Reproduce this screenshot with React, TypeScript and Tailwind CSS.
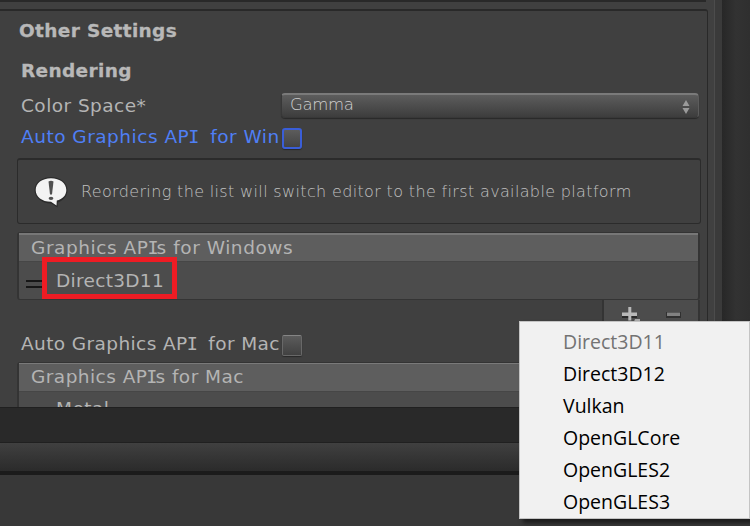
import React from "react";

const body = "font-['DejaVu_Sans',Verdana,sans-serif] text-[18.5px] leading-[24px] whitespace-pre text-[#b4b4b4]";
const heading = "font-['DejaVu_Sans',Verdana,sans-serif] text-[18.5px] leading-[24px] font-bold tracking-[0.350px] whitespace-pre text-[#b8b8b8] [-webkit-text-stroke:0.3px_#b8b8b8]";

function SerifI() {
  return <span className="-mx-px font-['DejaVu_Sans_Mono',monospace] text-[18.5px] tracking-[-1px]">I</span>;
}

function Checkbox({ active = false }: { active?: boolean }) {
  return (
    <span
      className={
        active
          ? "h-[21px] w-5 shrink-0 rounded-[3px] border-2 border-[#3a5ed8] bg-linear-to-b from-[#5c5c5c] to-[#444] shadow-[0_1px_1px_#292929]"
          : "h-[21px] w-5 shrink-0 rounded-[2px] border border-[#686868] border-t-[#858585] bg-linear-to-b from-[#5c5c5c] to-[#414141] shadow-[0_1px_1px_#292929]"
      }
    />
  );
}

function InfoIcon() {
  return (
    <svg width="38" height="34" viewBox="0 0 38 34" className="shrink-0">
      <path d="M19 2C9.800 2 2.500 7.500 2.500 15S9.800 28.500 19 28.500l6.500 4 .3-5C31.500 25.500 35.500 21.200 35.500 15 35.500 7.500 28.200 2 19 2Z" fill="#2c2c2c" />
      <path d="M19 3.200C10 3.200 3.700 8.200 3.700 15S10 26.800 19 26.800l5.500 3.700.3-4.900C30.500 24 34.300 20.700 34.300 15 34.300 8.200 28 3.200 19 3.200Z" fill="#f3f3f3" />
      <path d="M16.500 6.500q2.500-1.400 5 0L20 19.500h-2Z" fill="#505050" />
      <ellipse cx="19" cy="23.300" rx="2.400" ry="1.600" fill="#505050" />
    </svg>
  );
}

const apis = ["Direct3D11", "Direct3D12", "Vulkan", "OpenGLCore", "OpenGLES2", "OpenGLES3"];

export default function App() {
  return (
    <div className="relative h-[526px] w-[750px] overflow-hidden bg-[#383838]">
      <div className="flex h-[407px]">
        <div className="flex w-[722px] overflow-hidden bg-[#404040]">
          <div className="w-[708px]">
            <div className="h-[2px] w-[706px] bg-[#292929]" />
            <div className="mt-[7px] h-[398px] overflow-hidden rounded-tr-[3px] border-t-2 border-r border-[#292929]">
              <div className="flex h-[39px] items-center pl-[19px]">
                <h2 className={heading}>Other Settings</h2>
              </div>
              <div className="flex h-[40px] items-center pt-[2px] pl-[21px]">
                <h3 className={heading}>Rendering</h3>
              </div>
              <div className="flex h-[30px] pl-[21px]">
                <span className={body + " w-[260px] pt-[4px] tracking-[0.450px]"}>Color Space*</span>
                <div className="mt-[3px] flex h-[25px] w-[418px] justify-between rounded-[4px] border border-t-2 border-[#383838] border-t-[#7a7a7a] border-r-[#5c5c5c] bg-linear-to-b from-[#5d5d5d] to-[#3d3d3d] pr-[8px] pl-[8px] shadow-[0_1px_1px_#292929]">
                  <span className="pt-px font-['DejaVu_Sans',Verdana,sans-serif] text-[16.5px] leading-[18px] font-extralight tracking-[-0.300px] text-[#d0d0d0]">Gamma</span>
                  <svg width="8" height="14" viewBox="0 0 8 14" className="mt-[5px]" fill="#9a9a9a">
                    <path d="M4 0 7.500 6h-7ZM.5 8h7L4 14Z" />
                  </svg>
                </div>
              </div>
              <div className="flex h-[38px] pl-[21px]">
                <span className={body + " w-[261px] pt-[5px] tracking-[0.500px] text-[#4f7ff5]!"}>Auto Graphics AP<SerifI />  for Win</span>
                <div className="mt-[8px] flex"><Checkbox active /></div>
              </div>
              <div className="ml-[17px] flex h-[66px] w-[684px] items-center rounded-[3px] border border-t-2 border-[#2b2b2b] pl-[14px]">
                <InfoIcon />
                <span className="pt-px pl-[11px] font-['DejaVu_Sans',Verdana,sans-serif] text-[16px] leading-[24px] font-extralight tracking-[0.350px] whitespace-pre text-[#c0c0c0]">Reordering the list will switch editor to the first available platform</span>
              </div>
              <div className="mt-[8px] ml-[17px] w-[683px] rounded-[3px] border border-r-2 border-l-2 border-[#343434] bg-[#4c4c4c]">
                <div className="flex h-[28px] border-t-2 border-[#777] bg-[#5e5e5e] pt-px pl-[12px]">
                  <span className={body + " tracking-[0.550px]"}>Graphics AP<SerifI />s for Windows</span>
                </div>
                <div className="flex h-[38px] items-center border-t border-[#464646] pl-[7px]">
                  <div className="mt-[7px] flex h-[8px] w-[17px] flex-col justify-between border-y-2 border-t-[#171717] border-b-[#171717]" />
                  <span className={body + " pl-[13px] tracking-[0.300px]"}>Direct3D11</span>
                </div>
              </div>
              <div className="ml-[602px] flex h-[32px] w-[98px] justify-between border-r-2 border-l-2 border-[#343434] bg-[#4c4c4c] pt-[6px] pr-[17px] pl-[17px]">
                <svg width="20" height="20" viewBox="0 0 20 20">
                  <path d="M1 8h15v4H1Z" fill="#292929" />
                  <path d="M1 6.500h15v3.500H1ZM7.300 1h3v13.500h-3Z" fill="#b8b8b8" />
                  <path d="M14 13h5v2.500h-6Z" fill="#aaa" />
                </svg>
                <svg width="16" height="20" viewBox="0 0 16 20">
                  <path d="M1 6h15v6H1Z" fill="#303030" />
                  <path d="M2 6.500h13v3.500H2Z" fill="#818181" />
                </svg>
              </div>
              <div className="flex h-[30px] pl-[21px]">
                <span className={body + " w-[261px] tracking-[0.400px]"}>Auto Graphics AP<SerifI />  for Mac</span>
                <div className="mt-[3px] flex"><Checkbox /></div>
              </div>
              <div className="ml-[17px] h-[60px] w-[683px] rounded-t-[3px] border border-r-2 border-l-2 border-[#343434] bg-[#4c4c4c]">
                <div className="flex h-[28px] border-t border-[#7a7a7a] bg-[#5e5e5e] pt-px pl-[12px]">
                  <span className={body + " tracking-[0.450px]"}>Graphics AP<SerifI />s for Mac</span>
                </div>
                <div className={body + " border-t border-[#464646] pt-[5px] pl-[37px] tracking-[0.450px]"}>Metal</div>
              </div>
            </div>
          </div>
          <div className="ml-[6px] w-[8px] border-l border-[#4c4c4c] bg-[#3a3a3a]" />
        </div>
        <div className="w-[28px] bg-linear-to-r from-[#272727] via-[#323232] to-[#2f2f2f]" />
      </div>
      <div className="h-[36px] border-y border-[#202020] bg-[#292929]" />
      <div className="h-[32px] border-b-4 border-[#1b1b1b] bg-linear-to-b from-[#404040] to-[#2b2b2b]" />

      <div className="absolute top-[257px] left-[42px] h-[42px] w-[135px] border-5 border-[#ee1c24]" />

      <div className="absolute top-[321px] left-[519px] w-[231px] border border-[#c4c4c4] bg-[#f1f1f1] pt-[4px] shadow-[4px_4px_4px_rgba(0,0,0,0.5)]">
        {apis.map((api, i) => (
          <div
            key={api}
            className={
              i === 0
                ? "flex h-[32px] items-center pl-[43px] font-['Open_Sans','Noto_Sans',sans-serif] text-[19.500px] text-[#737373]"
                : "flex h-[32px] items-center pl-[43px] font-['Open_Sans','Noto_Sans',sans-serif] text-[19.500px] text-black"
            }
          >
            {api}
          </div>
        ))}
      </div>
    </div>
  );
}
